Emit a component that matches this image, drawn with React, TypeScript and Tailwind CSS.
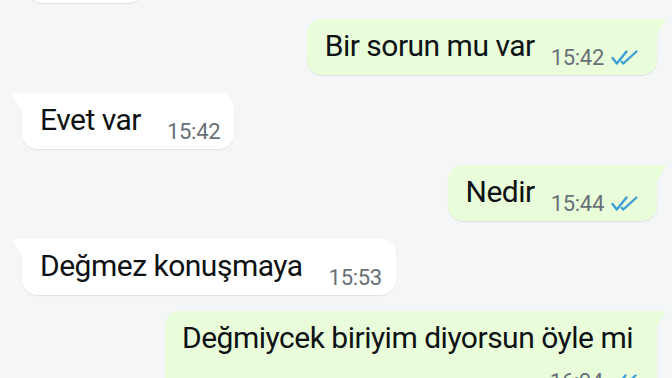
import type { ReactNode } from 'react';

type Msg = {
  text: string;
  time: string;
  out?: boolean;
  tail?: boolean;
  wrap?: boolean;
  mt: string;
};

const messages: Msg[] = [
  { text: 'Bir sorun mu var', time: '15:42', out: true, tail: true, mt: 'mt-[16px]' },
  { text: 'Evet var', time: '15:42', tail: true, mt: 'mt-[18px]' },
  { text: 'Nedir', time: '15:44', out: true, tail: true, mt: 'mt-[16px]' },
  { text: 'Değmez konuşmaya', time: '15:53', tail: true, mt: 'mt-[18px]' },
  { text: 'Değmiycek biriyim diyorsun öyle mi', time: '16:04', out: true, tail: true, wrap: true, mt: 'mt-[16px]' },
];

function Checks() {
  return (
    <svg width="27" height="15" viewBox="0 0 27 15" fill="none" className="ml-[7px] mb-[4px]">
      <path d="M1.5 8 L5.8 13.5 L15.5 1.5" stroke="#3a9dd6" strokeWidth="2.3" strokeLinecap="round" strokeLinejoin="round" />
      <path d="M10.8 11.8 L12.3 13.5 L25.5 1.5" stroke="#3a9dd6" strokeWidth="2.3" strokeLinecap="round" strokeLinejoin="round" />
    </svg>
  );
}

function Time({ time, out }: { time: string; out?: boolean }) {
  return (
    <div className="flex items-end shrink-0">
      <span className="text-[22px] leading-none tracking-[-0.3px] text-[#687076]">{time}</span>
      {out && <Checks />}
    </div>
  );
}

function Tail({ out }: { out?: boolean }) {
  if (out) {
    return (
      <svg width="11" height="17" viewBox="0 0 11 17" className="absolute -right-[10px] top-0">
        <path d="M0 0 H8.5 Q10.5 0 9.5 1.8 L0 17 Z" fill="#e9fdda" />
      </svg>
    );
  }
  return (
    <svg width="12" height="19" viewBox="0 0 12 19" className="absolute -left-[11px] top-0">
      <path d="M12 0 H2.5 Q0.3 0 1.5 1.8 L12 19 Z" fill="#ffffff" />
    </svg>
  );
}

function Bubble({ m }: { m: Msg }) {
  const bg = m.out ? 'bg-[#e9fdda]' : 'bg-white';
  const corner = m.tail ? (m.out ? 'rounded-tr-none' : 'rounded-tl-none') : '';
  let body: ReactNode;
  if (m.wrap) {
    body = (
      <div className="flex flex-col pl-[17px] pr-[24px] pt-[10px]">
        <span className="text-[30px] leading-[34px] tracking-[-0.5px] text-[#0e1215]">{m.text}</span>
        <div className="flex justify-end mt-[16px] -mr-[4px]">
          <Time time={m.time} out={m.out} />
        </div>
        <div className="h-[10px]" />
      </div>
    );
  } else {
    body = (
      <div className={`flex items-end pt-[10px] pb-[6px] pl-[18px] ${m.out ? 'pr-[19px]' : 'pr-[14px]'}`}>
        <span
          className={`text-[30px] leading-[34px] tracking-[-0.5px] text-[#0e1215] mb-[6px] ${m.out ? 'mr-[16px]' : 'mr-[26px]'}`}
        >
          {m.text}
        </span>
        <Time time={m.time} out={m.out} />
      </div>
    );
  }
  return (
    <div className={`flex ${m.out ? 'justify-end' : 'justify-start'} ${m.mt}`}>
      <div className={`relative rounded-[15px] ${corner} ${bg} shadow-[0_1px_1px_rgba(0,0,0,0.09)]`}>
        {m.tail && <Tail out={m.out} />}
        {body}
      </div>
    </div>
  );
}

export default function App() {
  return (
    <div className="w-[672px] h-[378px] overflow-hidden bg-[#f5f6f8] font-['Roboto','Liberation_Sans',sans-serif]">
      <div className="flex flex-col pl-[22px] pr-[15px]">
        {/* cut-off message above */}
        <div className="flex justify-start -mt-[39px]">
          <div className="ml-[5px] w-[116px] h-[42px] rounded-[15px] bg-white shadow-[0_1px_1px_rgba(0,0,0,0.09)]" />
        </div>
        {messages.map((m) => (
          <Bubble key={m.text} m={m} />
        ))}
      </div>
    </div>
  );
}
